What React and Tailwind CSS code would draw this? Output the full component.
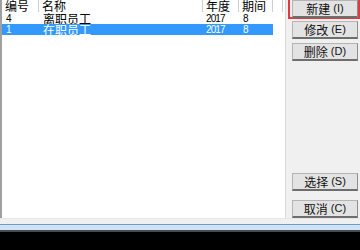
import React from "react";

const cjk = { fontFamily: '"Noto Sans CJK SC", "Liberation Sans", sans-serif' };
const num = { fontFamily: '"Liberation Sans", Arial, sans-serif' };

function Btn({ label, hot, className = "" }) {
  return (
    <div
      className={`w-[66px] h-[18px] bg-[#e3e3e3] border border-[#b4b4b4] border-b-2 border-b-[#6e6e6e] border-r-[#8c8c8c] flex items-center justify-center text-[12px] leading-none text-[#111] ${className}`}
      style={cjk}
    >
      <span>{label}</span>
      <span className="ml-[3px] text-[11px]" style={num}>({hot})</span>
    </div>
  );
}

export default function App() {
  const cols = [
    { w: "w-[37px]", t: "编号" },
    { w: "w-[164px]", t: "名称" },
    { w: "w-[36px]", t: "年度" },
    { w: "w-[34px]", t: "期间" },
  ];
  const rows = [
    { id: "4", name: "离职员工", y: "2017", p: "8", sel: false },
    { id: "1", name: "在职员工", y: "2017", p: "8", sel: true },
  ];
  return (
    <div className="w-[360px] h-[250px] bg-black overflow-hidden">
      <div className="flex h-[218px] bg-[#f0f0f0]">
        <div className="w-[286px] h-full bg-white border-l-2 border-l-[#a0a0a0] border-r border-r-[#d9d9d9] flex flex-col">
          <div className="flex h-[12px] bg-white">
            {cols.map((c) => (
              <div
                key={c.t}
                className={`${c.w} h-full border-r border-[#cfcfcf] pl-[3px] text-[12px] leading-[11px] text-black`}
                style={cjk}
              >
                {c.t}
              </div>
            ))}
            <div className="w-[10px] h-full border-r border-[#cfcfcf]" />
          </div>
          {rows.map((r) => (
            <div
              key={r.id}
              className={`flex w-[271px] h-[11px] mt-[0.5px] ${r.sel ? "bg-[#3399ff] text-white" : "text-black"}`}
            >
              <div className="w-[37px] pl-[4px] text-[10px] leading-[11px]" style={num}>{r.id}</div>
              <div className="w-[164px] pl-[4px] text-[12px] leading-[11px]" style={cjk}>{r.name}</div>
              <div className="w-[36px] pl-[3px] text-[10px] leading-[11px] tracking-[-0.9px]" style={num}>{r.y}</div>
              <div className="w-[34px] pl-[4px] text-[10px] leading-[11px]" style={num}>{r.p}</div>
            </div>
          ))}
        </div>
        <div className="flex-1 flex flex-col pl-[2px]">
          <div className="mt-[-2px] w-[72px] h-[21px] border-2 border-[#e23a3a] pl-[2px] pt-0">
            <Btn label="新建" hot="I" />
          </div>
          <Btn label="修改" hot="E" className="mt-[2px] ml-[4px]" />
          <Btn label="删除" hot="D" className="mt-[4px] ml-[4px]" />
          <Btn label="选择" hot="S" className="mt-[112px] ml-[4px]" />
          <Btn label="取消" hot="C" className="mt-[9px] ml-[4px]" />
        </div>
      </div>
      <div className="h-[6px] bg-[#f0f0f0] border-t border-[#e6e6e6]" />
      <div className="h-[6px] bg-[#cfe3f6] border-t border-[#6f9cc6]" />
      <div className="h-[2px] bg-[#4a4a4a]" />
    </div>
  );
}
